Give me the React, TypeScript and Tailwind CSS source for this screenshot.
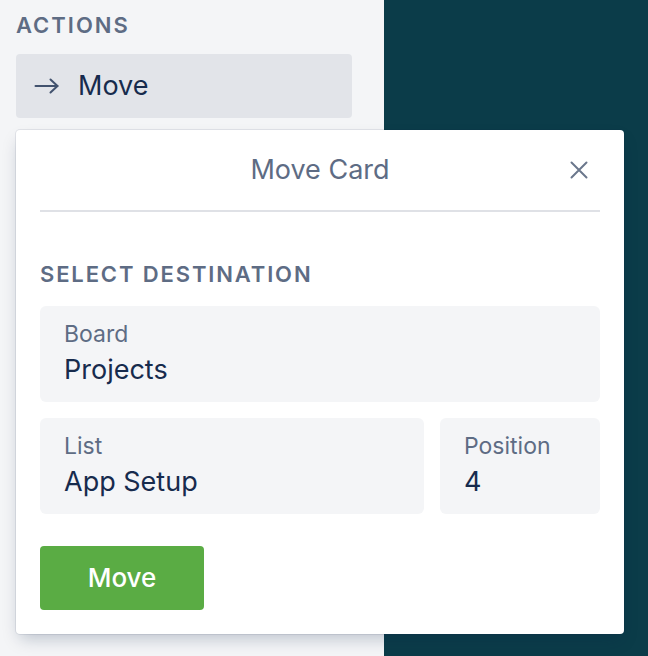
import React from "react";

const font = { fontFamily: '"Inter", "Noto Sans", sans-serif' };

function Field({ label, value, className }: { label: string; value: string; className?: string }) {
  return (
    <div className={"rounded-[6px] bg-[#f4f5f7] h-[96px] px-6 pt-[14px] " + (className || "")}>
      <div className="text-[23px] leading-[28px] text-[#5e6c84]">{label}</div>
      <div className="mt-[6px] text-[27px] leading-[32px] text-[#172b4d]">{value}</div>
    </div>
  );
}

export default function App() {
  return (
    <div className="relative w-[648px] h-[656px] flex overflow-hidden" style={font}>
      <div className="w-[384px] h-full bg-[#f4f5f7] px-4 pt-[12px]">
        <div className="text-[22px] leading-[26px] font-semibold tracking-[0.09em] text-[#5e6c84]">ACTIONS</div>
        <div className="mt-[16px] w-[336px] h-[64px] rounded-[4px] bg-[#e2e4e9] flex items-center pl-[18px]">
          <svg width="25" height="16" viewBox="0 0 25 16" fill="none" stroke="#42526e" strokeWidth="2" strokeLinecap="round" strokeLinejoin="round">
            <path d="M1.5 8h22" />
            <path d="M16.5 1.5 23.5 8l-7 6.5" />
          </svg>
          <span className="ml-[19px] text-[27px] leading-[32px] text-[#172b4d]">Move</span>
        </div>
      </div>
      <div className="flex-1 h-full bg-[#0b3c49]" />

      <div className="absolute left-4 top-[130px] w-[608px] h-[504px] bg-white rounded-[4px] shadow-[0_8px_16px_-4px_rgba(9,30,66,0.25),0_0_0_1px_rgba(9,30,66,0.08)] px-6">
        <div className="relative h-[82px] border-b-2 border-[#dfe1e6] flex items-center justify-center">
          <span className="text-[27px] leading-[32px] text-[#5e6c84]">Move Card</span>
          <svg className="absolute right-[12px] top-[31px]" width="18" height="18" viewBox="0 0 18 18" fill="none" stroke="#6b778c" strokeWidth="2" strokeLinecap="round">
            <path d="M1.5 1.5l15 15M16.5 1.5l-15 15" />
          </svg>
        </div>
        <div className="mt-[49px] text-[22px] leading-[26px] font-semibold tracking-[0.085em] text-[#5e6c84]">SELECT DESTINATION</div>
        <Field className="mt-[19px]" label="Board" value="Projects" />
        <div className="mt-4 flex gap-4">
          <Field className="flex-1" label="List" value="App Setup" />
          <Field className="w-[160px]" label="Position" value="4" />
        </div>
        <button className="mt-8 w-[164px] h-[64px] rounded-[4px] bg-[#5aac44] text-white text-[26px] leading-[32px] font-medium flex items-center justify-center">
          Move
        </button>
      </div>
    </div>
  );
}
